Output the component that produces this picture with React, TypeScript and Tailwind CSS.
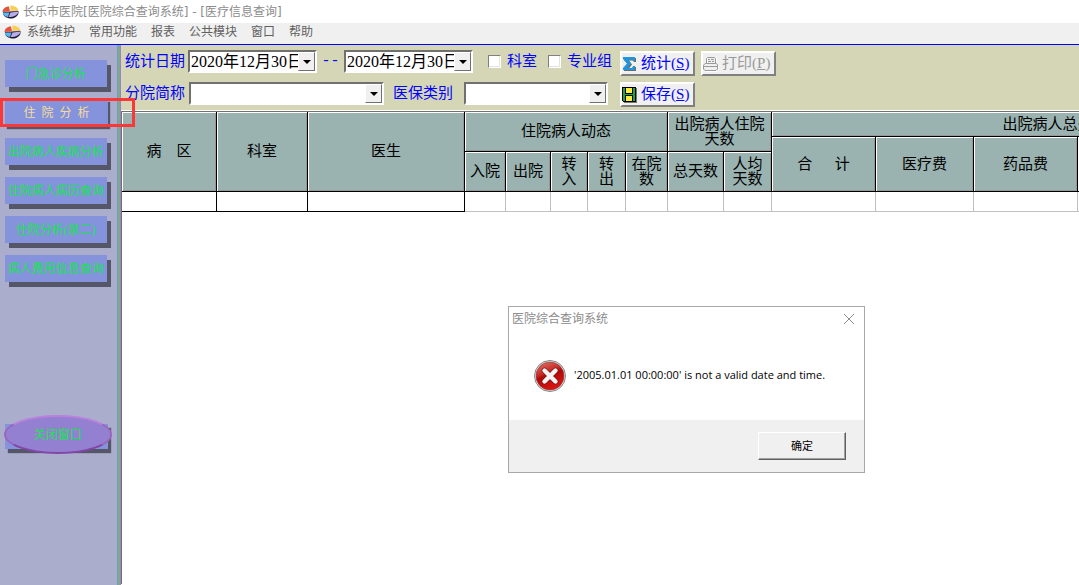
import type { ReactNode } from 'react';

const menus = ['系统维护', '常用功能', '报表', '公共模块', '窗口', '帮助'];

const navItems = [
  { title: '门急诊分析', active: false },
  { title: '住\u2002院\u2002分\u2002析', active: true },
  { title: '出院病人疾病分析', active: false },
  { title: '住院病人病历查询', active: false },
  { title: '住院分析(泉二)', active: false },
  { title: '病人费用信息查询', active: false }
];

const columnWidths = [
  'w-[95px]', 'w-[91px]', 'w-[157px]', 'w-[41px]', 'w-[45px]', 'w-[37px]', 'w-[38px]',
  'w-[42px]', 'w-[56px]', 'w-[48px]', 'w-[104px]', 'w-[98px]', 'w-[104px]', 'w-[261px]'
];

function PieIcon() {
  return (
    <svg width="17" height="14" viewBox="0 0 17 14" className="shrink-0">
      <path d="M1 7v2c1 3 5 4.500 8 4.500s7-2 7.500-5.500V6z" fill="#1c1c3c" />
      <path d="M8 6.500 7 1.500C3 1.500.500 4 .500 7z" fill="#e2543c" />
      <path d="M8.500 6 8.500.500C13 .500 16 3 16.500 5.500z" fill="#f6d055" />
      <path d="M7.500 7.500.500 7.500C1 10 3 11.500 6 12z" fill="#5cb8ea" />
      <path d="M8.500 7.500 16.500 6.500C16 10 12 12 6.500 12z" fill="#b9aeea" />
      <path d="M8 7 16 6M8 7 6.500 12" stroke="#5a3a55" strokeWidth=".5" fill="none" />
    </svg>
  );
}

function SigmaIcon() {
  return (
    <svg width="16" height="16" viewBox="0 0 16 16" className="shrink-0">
      <path d="M2 2h12v4h-2l-1-1.500H7L10 8.500 6.500 13H11l1-2h2v4H2v-2l4-4.500L2 4z" fill="#6b6b6b" />
      <path d="M1 1h12v4h-2l-1-1.500H6L9 7.500 5.500 12H10l1-2h2v4H1v-2l4-4.500L1 3z" fill="#2196dc" />
    </svg>
  );
}

function PrinterIcon() {
  return (
    <svg width="16" height="16" viewBox="0 0 16 16" className="shrink-0" fill="none">
      <path d="M4.500 7.500V2.500M13.500 2v6M15.500 10v4L14 15.500H2.500" stroke="#fff" />
      <path d="M3.500 7.500V2.500L4.500 1.500H11.500L12.500 2.500V7.500M2.500 7.500h11l1 1.500v4L13 14.500H2L.500 13V9zM.500 10.500h14" stroke="#9a9a9a" />
      <path d="M5 3.500h2m1 0h3M5 5.500h3m1 0h2" stroke="#9a9a9a" />
    </svg>
  );
}

function DiskIcon() {
  return (
    <svg width="16" height="16" viewBox="0 0 16 16" className="shrink-0" shapeRendering="crispEdges">
      <path d="M2 1h13v15H2z" fill="#777" />
      <path d="M0 0h14v15H1l-1-1z" fill="#000" />
      <path d="M1 1h12v13H1z" fill="#18a83c" />
      <path d="M3 0h8v7H3zM3 8h8v7H3z" fill="#000" />
      <path d="M4 1h6v5H4zM4 9h6v5H4z" fill="#ffee3c" />
    </svg>
  );
}

function ErrorIcon() {
  return (
    <svg width="32" height="32" viewBox="0 0 32 32" className="shrink-0">
      <defs>
        <linearGradient id="errorFill" x1="0" y1="0" x2="0.4" y2="1">
          <stop offset="0" stopColor="#e07a70" />
          <stop offset="0.45" stopColor="#c62a26" />
          <stop offset="0.55" stopColor="#ad0a08" />
          <stop offset="1" stopColor="#d81414" />
        </linearGradient>
      </defs>
      <circle cx="16" cy="16" r="15.500" fill="#e8e8e8" stroke="#858585" />
      <circle cx="16" cy="16" r="14" fill="url(#errorFill)" stroke="#8c3a36" strokeWidth=".6" />
      <path d="M10.500 10.500l11 11M21.500 10.500l-11 11" stroke="#7e1010" strokeWidth="5.500" strokeLinecap="round" />
      <path d="M10.500 10.500l11 11M21.500 10.500l-11 11" stroke="#f4f4f4" strokeWidth="4.400" strokeLinecap="round" />
    </svg>
  );
}

function Combo({ id, label, value, width }: { id: string; label: string; value: string; width: string }) {
  return (
    <div className={`relative h-[23px] shrink-0 border-2 border-t-[#707070] border-r-white border-b-white border-l-[#707070] bg-white ${width}`}>
      <select id={id} aria-label={label} className="block h-full w-full appearance-none bg-white pl-px text-[16px] leading-[19px] text-black outline-none">
        <option>{value}</option>
      </select>
      <span className="pointer-events-none absolute inset-y-0 right-0 flex w-[17px] items-center justify-center border border-t-white border-r-[#707070] border-b-[#707070] border-l-white bg-[#f0f0f0]">
        <svg width="8" height="4" viewBox="0 0 8 4">
          <path d="M0 0h8L4 4z" fill="#000" />
        </svg>
      </span>
    </div>
  );
}

function Check({ id, label }: { id: string; label: string }) {
  return (
    <div className="flex items-center gap-[6px]">
      <input
        id={id}
        type="checkbox"
        className="h-[13px] w-[13px] appearance-none border border-t-[#808080] border-r-white border-b-white border-l-[#808080] bg-white shadow-[inset_-1px_-1px_0_#e3e3e3]"
      />
      <label htmlFor={id}>{label}</label>
    </div>
  );
}

function ToolButton({ icon, text, hotkey, disabled }: { icon: ReactNode; text: string; hotkey: string; disabled?: boolean }) {
  return (
    <button
      disabled={disabled}
      className="flex h-[25px] w-[75px] items-center gap-[3px] border-2 border-t-white border-r-[#808080] border-b-[#808080] border-l-white bg-[#f0f0f0] whitespace-nowrap disabled:text-[#9a9a9a]"
    >
      {icon}
      <span>
        {text}(<u>{hotkey}</u>)
      </span>
    </button>
  );
}

function Th({ children, rowSpan, colSpan }: { children?: ReactNode; rowSpan?: number; colSpan?: number }) {
  return (
    <th
      rowSpan={rowSpan}
      colSpan={colSpan}
      className="border-r border-b border-black bg-[#9ab3b0] p-0 text-center align-middle font-normal whitespace-pre-line shadow-[inset_1px_1px_0_#fff,inset_-1px_-1px_0_#979797]"
    >
      {children}
    </th>
  );
}

export default function App() {
  return (
    <div className="relative flex min-h-screen flex-col overflow-hidden bg-white font-['Liberation_Serif','Noto_Sans_CJK_SC',serif]">
      <header className="font-['DejaVu_Sans','Noto_Sans_CJK_SC',sans-serif] text-[12px]">
        <div className="flex h-[23px] items-center gap-1 pl-[2px] text-[#8c8c8c]">
          <PieIcon />
          <h1>长乐市医院[医院综合查询系统] - [医疗信息查询]</h1>
        </div>
        <nav className="flex h-[21px] items-center gap-[6px] bg-[#f0f0f0] pb-[3px] pl-1 text-[#606060]">
          <PieIcon />
          <div className="flex gap-[14px]">
            {menus.map((menu) => (
              <button key={menu}>{menu}</button>
            ))}
          </div>
        </nav>
      </header>

      <div className="flex flex-1 border-t border-[#0000ff]">
        <aside className="relative w-[117px] shrink-0 bg-[#aaadcc] pt-[15px] pl-[5px] text-[12px] text-[#14e650]">
          <div className="flex flex-col gap-3">
            {navItems.map((item) => (
              <button
                key={item.title}
                className={
                  item.active
                    ? 'h-[27px] w-[103px] bg-[#8592dc] text-[#f5dc9a] shadow-[2px_3px_1px_#555768]'
                    : 'h-[27px] w-[102px] bg-[#8592dc] whitespace-nowrap shadow-[4px_5px_0_#555768]'
                }
              >
                {item.title}
              </button>
            ))}
          </div>
          <div className="relative mt-[142px] h-[25px] w-[103px] bg-[#8592dc] shadow-[3px_4px_1px_#555768]">
            <button className="absolute -top-[9px] -left-px h-[39px] w-[108px] rounded-[50%] border-2 border-t-[#b980dc] border-r-[#9a66c0] border-b-[#8246a8] border-l-[#9a66c0] bg-[#9480d0]">
              关闭窗口
            </button>
          </div>
          {/* marker around the current page */}
          <div className="pointer-events-none absolute top-[53px] left-0 z-10 h-[29px] w-[135px] border-3 border-[#fb3838]" />
        </aside>
        <div className="w-[4px] shrink-0 border-r border-l border-r-[#a080c8] border-l-[#6f9fb8] bg-[#7fa98e]" />

        <main className="min-w-0 flex-1 overflow-hidden">
          <form className="flex flex-col gap-[7px] bg-[#d5d6b5] pt-[5px] pb-[3px] pl-1 text-[15px] leading-[23px] whitespace-nowrap text-[#0000ff]">
            <div className="flex h-[25px] items-start">
              <label htmlFor="dateFrom" className="mr-[3px]">统计日期</label>
              <Combo id="dateFrom" label="统计日期" value="2020年12月30日" width="w-[129px]" />
              <span className="w-[27px] text-center font-['Liberation_Mono',monospace]">--</span>
              <Combo id="dateTo" label="统计日期" value="2020年12月30日" width="w-[129px]" />
              <div className="mr-2 ml-[15px] flex gap-[11px]">
                <Check id="dept" label="科室" />
                <Check id="group" label="专业组" />
              </div>
              <div className="flex gap-[6px] pt-px">
                <ToolButton icon={<SigmaIcon />} text="统计" hotkey="S" />
                <ToolButton icon={<PrinterIcon />} text="打印" hotkey="P" disabled />
              </div>
            </div>
            <div className="flex h-[25px] items-start">
              <label htmlFor="branch" className="mr-1">分院简称</label>
              <Combo id="branch" label="分院简称" value="" width="w-[195px]" />
              <label htmlFor="insurance" className="mr-[11px] ml-[9px]">医保类别</label>
              <Combo id="insurance" label="医保类别" value="" width="w-[144px]" />
              <div className="ml-3">
                <ToolButton icon={<DiskIcon />} text="保存" hotkey="S" />
              </div>
            </div>
          </form>

          <div className="border-t border-white">
            <div className="min-h-[473px] border-t border-l border-[#707070]">
              <table className="w-[1217px] table-fixed border-separate border-spacing-0 text-[15px] leading-[15px] text-black">
                <colgroup>
                  {columnWidths.map((width, idx) => (
                    <col key={idx} className={width} />
                  ))}
                </colgroup>
                <thead>
                  <tr className="h-[25px]">
                    <Th rowSpan={3}>病&emsp;区</Th>
                    <Th rowSpan={3}>科室</Th>
                    <Th rowSpan={3}>医生</Th>
                    <Th rowSpan={2} colSpan={5}>住院病人动态</Th>
                    <Th rowSpan={2} colSpan={2}>{'出院病人住院\n天数'}</Th>
                    <Th colSpan={4}>出院病人总费用</Th>
                  </tr>
                  <tr className="h-[15px]">
                    <Th rowSpan={2}>合&emsp;&ensp;计</Th>
                    <Th rowSpan={2}>医疗费</Th>
                    <Th rowSpan={2}>药品费</Th>
                    <Th rowSpan={2} />
                  </tr>
                  <tr className="h-[40px]">
                    <Th>入院</Th>
                    <Th>出院</Th>
                    <Th>{'转\n入'}</Th>
                    <Th>{'转\n出'}</Th>
                    <Th>{'在院\n数'}</Th>
                    <Th>总天数</Th>
                    <Th>{'人均\n天数'}</Th>
                  </tr>
                </thead>
                <tbody>
                  <tr className="h-[20px]">
                    {columnWidths.map((_, idx) => (
                      <td key={idx} className={idx < 3 ? 'border-r border-b border-black p-0' : 'border-r border-b border-[#c0c0c0] p-0'} />
                    ))}
                  </tr>
                </tbody>
              </table>
            </div>
          </div>
        </main>
      </div>

      <div
        role="dialog"
        aria-labelledby="dialogTitle"
        className="absolute top-[306px] left-[508px] w-[357px] border border-[#a8a8a8] bg-white font-['Open_Sans','Noto_Sans_CJK_SC',sans-serif] text-[12px]"
      >
        <div className="flex h-[24px] items-center justify-between pr-[9px] pl-[3px] text-[#8c8c8c]">
          <h2 id="dialogTitle">医院综合查询系统</h2>
          <button aria-label="关闭">
            <svg width="12" height="12" viewBox="0 0 12 12">
              <path d="M1 1l10 10M11 1L1 11" stroke="#8c8c8c" fill="none" />
            </svg>
          </button>
        </div>
        <div className="flex h-[89px] items-center gap-2 pl-[25px] text-black">
          <ErrorIcon />
          <p className="text-[11px] whitespace-nowrap">'2005.01.01 00:00:00' is not a valid date and time.</p>
        </div>
        <div className="flex h-[52px] items-center justify-end bg-[#f0f0f0] pr-[18px]">
          <button className="h-[28px] w-[88px] border border-t-white border-r-[#606060] border-b-[#606060] border-l-white bg-[#f0f0f0] text-[11px] text-black shadow-[inset_-1px_-1px_0_#a0a0a0]">
            确定
          </button>
        </div>
      </div>
    </div>
  );
}
